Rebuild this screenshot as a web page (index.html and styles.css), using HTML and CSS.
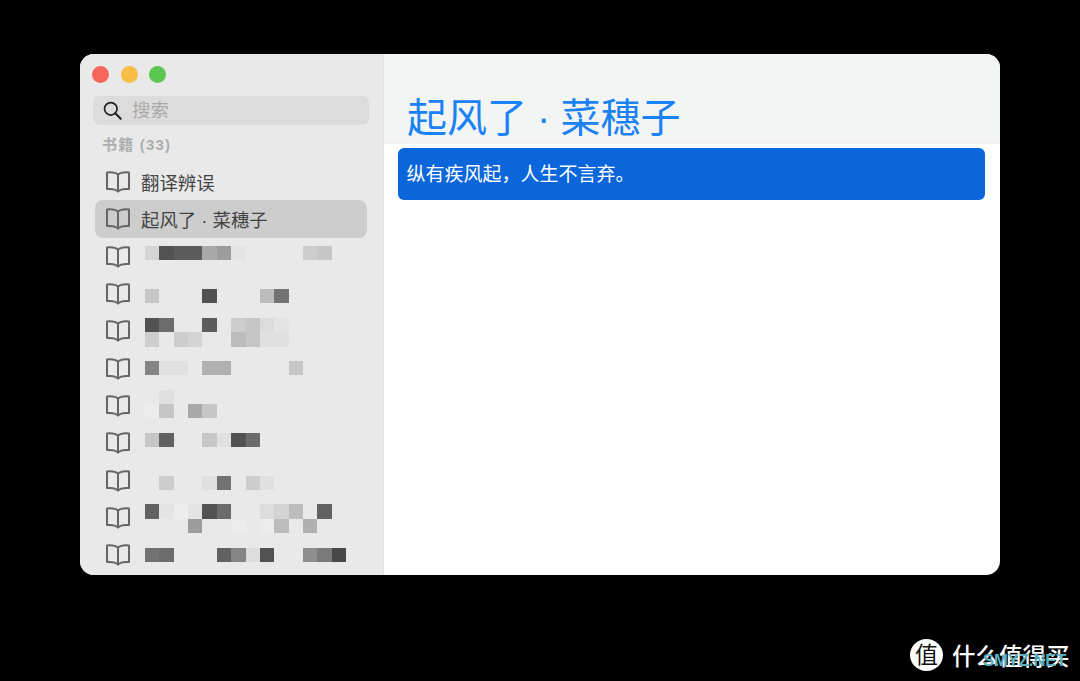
FILE: index.html
```html
<!DOCTYPE html>
<html lang="zh-CN">
<head>
    <meta charset="UTF-8">
    <title>起风了 · 菜穗子</title>
    <link rel="stylesheet" href="styles.css">
</head>
<body>
    <svg class="defs" width="0" height="0">
        <symbol id="book" viewBox="0 0 24 22">
            <path d="M12 3.6C10 1.7 6 1 1 1.4V18C6 17.6 9.6 18 12 20.6C14.4 18 18 17.6 23 18V1.4C18 1 14 1.7 12 3.6V20.6" fill="none" stroke="currentColor" stroke-width="2" stroke-linejoin="round"/>
        </symbol>
    </svg>

    <div class="window">
        <aside class="sidebar">
            <div class="traffic-lights">
                <span class="light red"></span>
                <span class="light yellow"></span>
                <span class="light green"></span>
            </div>

            <div class="search">
                <svg class="search-icon" viewBox="0 0 20 20">
                    <circle cx="8.2" cy="8.2" r="6.6" fill="none" stroke="currentColor" stroke-width="1.8"/>
                    <path d="M13 13L18.6 18.6" fill="none" stroke="currentColor" stroke-width="2.2" stroke-linecap="round"/>
                </svg>
                <span>搜索</span>
            </div>

            <div class="section-label">书籍 (33)</div>

            <ul class="book-list">
                <li class="book"><svg class="book-icon"><use href="#book"/></svg><span>翻译辨误</span></li>
                <li class="book active"><svg class="book-icon"><use href="#book"/></svg><span>起风了 · 菜穗子</span></li>
                <li class="book"><svg class="book-icon"><use href="#book"/></svg></li>
                <li class="book"><svg class="book-icon"><use href="#book"/></svg></li>
                <li class="book"><svg class="book-icon"><use href="#book"/></svg></li>
                <li class="book"><svg class="book-icon"><use href="#book"/></svg></li>
                <li class="book"><svg class="book-icon"><use href="#book"/></svg></li>
                <li class="book"><svg class="book-icon"><use href="#book"/></svg></li>
                <li class="book"><svg class="book-icon"><use href="#book"/></svg></li>
                <li class="book"><svg class="book-icon"><use href="#book"/></svg></li>
                <li class="book"><svg class="book-icon"><use href="#book"/></svg></li>
            </ul>

            <!-- pixelated titles, laid over the list -->
            <div class="mosaic">
                <div><i class="d4"></i><i class="s50"></i><i class="s5c"></i><i class="s5c"></i><i class="a8"></i><i class="s9a"></i><i class="e6"></i><i></i><i></i><i></i><i></i><i class="d0"></i><i class="c6"></i></div>
                <div></div>
                <div></div>
                <div><i class="c6"></i><i></i><i></i><i></i><i class="s50"></i><i></i><i></i><i></i><i class="bc"></i><i class="s70"></i></div>
                <div></div>
                <div><i class="s50"></i><i class="s6c"></i><i></i><i></i><i class="s5c"></i><i></i><i class="d0"></i><i class="c6"></i><i class="dc"></i><i class="e6"></i></div>
                <div><i class="d0"></i><i></i><i class="d0"></i><i class="d4"></i><i></i><i></i><i class="bc"></i><i class="c6"></i><i class="e2"></i><i class="e2"></i></div>
                <div></div>
                <div><i class="s85"></i><i class="e2"></i><i class="e2"></i><i></i><i class="b0"></i><i class="b0"></i><i></i><i></i><i></i><i></i><i class="c6"></i></div>
                <div></div>
                <div><i></i><i class="e2"></i></div>
                <div><i class="ec"></i><i class="c6"></i><i></i><i class="a8"></i><i class="c6"></i></div>
                <div></div>
                <div><i class="c6"></i><i class="s60"></i><i></i><i></i><i class="c6"></i><i class="e2"></i><i class="s50"></i><i class="s6c"></i></div>
                <div></div>
                <div></div>
                <div><i></i><i class="d0"></i><i></i><i></i><i class="e2"></i><i class="s70"></i><i></i><i class="d0"></i><i class="e2"></i></div>
                <div></div>
                <div><i class="s60"></i><i class="e6"></i><i class="ec"></i><i class="e6"></i><i class="s50"></i><i class="s6c"></i><i></i><i></i><i class="dc"></i><i class="d4"></i><i class="bc"></i><i></i><i class="s60"></i></div>
                <div><i></i><i></i><i></i><i class="s9a"></i><i></i><i></i><i class="ec"></i><i></i><i class="ec"></i><i class="bc"></i><i></i><i class="b0"></i></div>
                <div></div>
                <div><i class="s70"></i><i class="s6c"></i><i></i><i></i><i></i><i class="s60"></i><i class="s85"></i><i class="dc"></i><i class="s50"></i><i></i><i></i><i class="s8e"></i><i class="s78"></i><i class="s48"></i></div>
            </div>
        </aside>

        <main class="content">
            <header class="content-header">
                <h1>起风了 · 菜穗子</h1>
            </header>
            <div class="quote-card">纵有疾风起&#xFF0C;人生不言弃。</div>
        </main>
    </div>

    <div class="watermark">
        <span class="watermark-logo">值</span>
        <span class="watermark-name">什么值得买</span>
        <span class="watermark-stamp">SMYZ.NET</span>
    </div>
</body>
</html>
```

FILE: styles.css
```css
:root {
    --sidebar-bg: #e9e9e9;
    --header-bg: #f3f5f5;
    --title-color: #1a82f5;
    --card-color: #0a66da;
    --text-color: #444;
}

* {
    margin: 0;
    padding: 0;
    box-sizing: border-box;
}

html, body {
    height: 100%;
    overflow: hidden;
}

body {
    position: relative;
    background: #000;
    padding: 54px 80px 0;
    font-family: "Liberation Sans", "Noto Sans CJK SC", sans-serif;
    color: var(--text-color);
}

.defs {
    position: absolute;
}

.window {
    display: flex;
    height: 521px;
    background: #fff;
    border-radius: 14px;
    overflow: hidden;
}

.sidebar {
    position: relative;
    flex: 0 0 304px;
    background: var(--sidebar-bg);
    border-right: 1px solid #e2e2e2;
}

.traffic-lights {
    display: flex;
    gap: 11.5px;
    padding: 12px 0 0 12px;
}

.light {
    width: 17px;
    height: 17px;
    border-radius: 50%;
}

.red { background: #f5655a; }
.yellow { background: #f7bd45; }
.green { background: #5ac750; }

.search {
    display: flex;
    align-items: center;
    gap: 10px;
    height: 29px;
    width: 276px;
    margin: 13px 0 0 13px;
    padding-left: 10px;
    background: #dcdcdc;
    border-radius: 7px;
    font-size: 18.4px;
    color: #a9a9a9;
}

.search span {
    line-height: 27px;
}

.search-icon {
    width: 19px;
    height: 19px;
    color: #222;
}

.section-label {
    height: 38px;
    padding: 9px 0 0 22px;
    font-size: 15px;
    letter-spacing: 1.2px;
    line-height: 22px;
    font-weight: 700;
    color: #adadad;
}

.book-list {
    list-style: none;
}

.book {
    display: flex;
    align-items: center;
    gap: 11px;
    height: 37.3px;
    margin: 0 16px 0 15px;
    padding-left: 11px;
    border-radius: 8px;
    font-size: 18.4px;
    white-space: nowrap;
}

.book span {
    padding-top: 1px;
}

.book.active {
    background: #cdcdcd;
}

.book-icon {
    width: 24px;
    height: 22px;
    margin-top: 1px;
    color: #666;
}

.mosaic {
    position: absolute;
    left: 65px;
    top: 192px;
}

.mosaic div {
    display: flex;
    height: 14.37px;
}

.mosaic i {
    flex: 0 0 14.37px;
}

.s48 { background: #484848; }
.s50 { background: #525252; }
.s5c { background: #5c5c5c; }
.s60 { background: #626262; }
.s6c { background: #6c6c6c; }
.s70 { background: #727272; }
.s78 { background: #7a7a7a; }
.s85 { background: #858585; }
.s8e { background: #8e8e8e; }
.s9a { background: #9c9c9c; }
.a8 { background: #a9a9a9; }
.b0 { background: #b0b0b0; }
.bc { background: #bcbcbc; }
.c6 { background: #c6c6c6; }
.d0 { background: #cdcdcd; }
.d4 { background: #d4d4d4; }
.dc { background: #dcdcdc; }
.e2 { background: #e0e0e0; }
.e6 { background: #e4e4e4; }
.ec { background: #ececec; }

.content {
    flex: 1;
    min-width: 0;
}

.content-header {
    height: 90px;
    padding: 35px 0 0 23px;
    background: var(--header-bg);
    border-bottom: 1px solid #f0f0f0;
}

.content-header h1 {
    font-size: 40px;
    line-height: 58px;
    font-weight: 400;
    word-spacing: -1px;
    color: var(--title-color);
    white-space: nowrap;
}

.quote-card {
    height: 52px;
    margin: 4px 15px 0 14px;
    padding-left: 8.5px;
    background: var(--card-color);
    border-radius: 6px;
    font-size: 19px;
    line-height: 54px;
    color: #fff;
}

.watermark {
    position: absolute;
    left: 910px;
    top: 638px;
    display: flex;
    align-items: center;
    gap: 9px;
    white-space: nowrap;
}

.watermark-logo {
    width: 33px;
    height: 32px;
    border-radius: 50%;
    background: #fff;
    color: #111;
    font-size: 23px;
    line-height: 32px;
    text-align: center;
}

.watermark-name {
    font-size: 23.5px;
    font-weight: 500;
    color: #fff;
}

.watermark-stamp {
    position: absolute;
    left: 73px;
    top: 12px;
    font-size: 16.5px;
    font-weight: 700;
    line-height: 20px;
    color: #5ab0c0;
}
```
